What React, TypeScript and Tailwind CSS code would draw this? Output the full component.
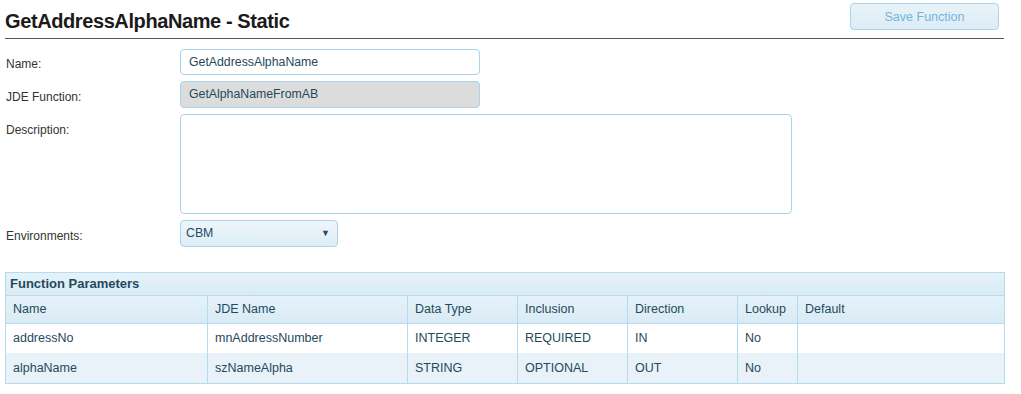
import React from "react";

const cols = [
  { label: "Name", w: "w-[202px]" },
  { label: "JDE Name", w: "w-[200px]" },
  { label: "Data Type", w: "w-[110px]" },
  { label: "Inclusion", w: "w-[110px]" },
  { label: "Direction", w: "w-[110px]" },
  { label: "Lookup", w: "w-[60px]" },
  { label: "Default", w: "" },
];

const rows = [
  ["addressNo", "mnAddressNumber", "INTEGER", "REQUIRED", "IN", "No", ""],
  ["alphaName", "szNameAlpha", "STRING", "OPTIONAL", "OUT", "No", ""],
];

export default function App() {
  return (
    <div
      className="w-[1021px] h-[394px] bg-white pl-[5px] pr-[17px] text-[12px] text-[#333]"
      style={{ fontFamily: '"Liberation Sans", Arial, sans-serif' }}
    >
      <div className="flex items-start justify-between h-[39px] border-b border-[#555]">
        <h1 className="text-[20px] font-bold text-[#1a1a1a] leading-none mt-[11px] tracking-[-0.4px]">
          GetAddressAlphaName - Static
        </h1>
        <button className="mt-[3px] mr-[5px] w-[149px] h-[27px] pt-[1px] rounded-[4px] border border-[#a9d4ea] bg-gradient-to-b from-[#e9f3f9] to-[#dcecf6] text-[#74b5da] text-[12.5px]">
          Save Function
        </button>
      </div>

      <div className="flex flex-col gap-[6px] mt-[10px]">
        <div className="flex items-center">
          <div className="w-[175px] pl-[1px] pt-[4px]">Name:</div>
          <div className="w-[300px] h-[26px] rounded-[4px] border border-[#a9d4ea] bg-white flex items-center pl-[8px] text-[#1f4a5e] text-[12.3px]">
            GetAddressAlphaName
          </div>
        </div>
        <div className="flex items-center">
          <div className="w-[175px] pl-[1px] pt-[4px]">JDE Function:</div>
          <div className="w-[300px] h-[27px] rounded-[4px] border border-[#a9d4ea] bg-[#dcdcdc] flex items-center pl-[8px] text-[#1f4a5e] text-[12.3px]">
            GetAlphaNameFromAB
          </div>
        </div>
        <div className="flex items-start">
          <div className="w-[175px] pl-[1px] pt-[7px]">Description:</div>
          <div className="w-[612px] h-[100px] rounded-[4px] border border-[#a9d4ea] bg-white" />
        </div>
        <div className="flex items-center">
          <div className="w-[175px] pl-[1px] pt-[4px]">Environments:</div>
          <div className="w-[158px] h-[27px] rounded-[4px] border border-[#a9d4ea] bg-gradient-to-b from-[#eef6fb] to-[#ddedf7] flex items-center justify-between pl-[5px] pr-[7px] text-[#1f4a5e] text-[12.3px]">
            <span>CBM</span>
            <span className="text-[9px] text-[#2a4a5e]">▼</span>
          </div>
        </div>
      </div>

      <div className="mt-[25px] w-[1000px] border border-[#b5dbee] text-[12.5px]">
        <div className="h-[23px] flex items-center pl-[4px] font-bold text-[13px] text-[#1f4a5e] bg-gradient-to-b from-[#e6f2f9] to-[#d9ebf5] border-b border-[#b5dbee]">
          Function Parameters
        </div>
        <div className="flex h-[28px] bg-gradient-to-b from-[#e6f2f9] to-[#d9ebf5] border-b border-[#b5dbee] text-[#1f4a5e]">
          {cols.map((c, i) => (
            <div
              key={i}
              className={`${c.w} ${i === cols.length - 1 ? "flex-1" : "border-r border-[#b5dbee]"} flex items-center pl-[7px]`}
            >
              {c.label}
            </div>
          ))}
        </div>
        {rows.map((r, ri) => (
          <div
            key={ri}
            className={`flex ${ri === 0 ? "h-[29px] bg-white" : "h-[30px] bg-[#e8f2f8]"} text-[#1f4a5e]`}
          >
            {r.map((v, i) => (
              <div
                key={i}
                className={`${cols[i].w} ${i === cols.length - 1 ? "flex-1" : "border-r border-[#b5dbee]"} flex items-center pl-[7px]`}
              >
                {v}
              </div>
            ))}
          </div>
        ))}
      </div>
    </div>
  );
}
